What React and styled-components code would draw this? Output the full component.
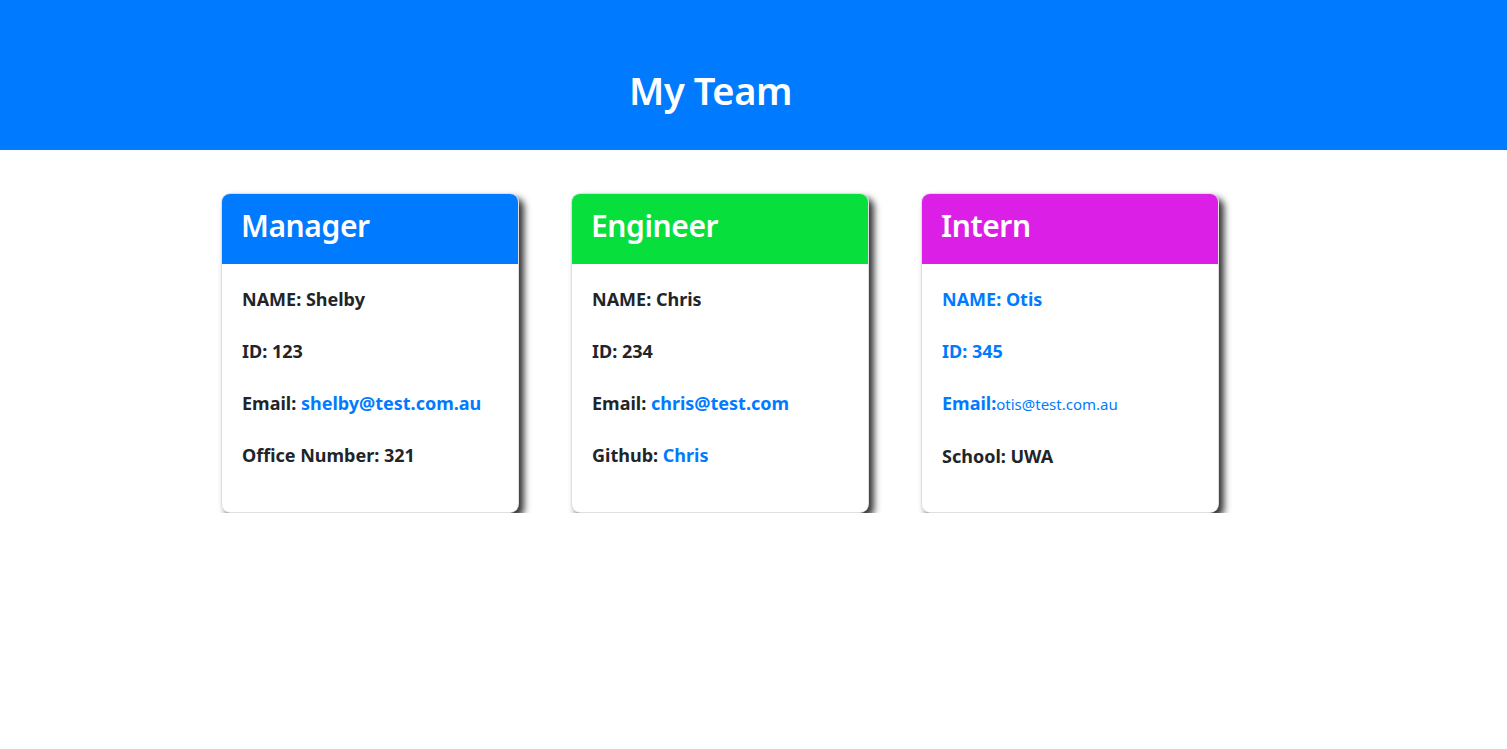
import React from "react";
import styled, { createGlobalStyle } from "styled-components";

const GlobalStyle = createGlobalStyle`
  body {
    margin: 0;
    font-family: "Noto Sans", "Open Sans", sans-serif;
    color: #212529;
    background-color: #fff;
  }
`;

const team = [
  {
    role: "Manager",
    color: "#007bff",
    lines: [
      { label: "NAME: Shelby" },
      { label: "ID: 123" },
      { label: "Email: ", link: "shelby@test.com.au" },
      { label: "Office Number: 321" },
    ],
  },
  {
    role: "Engineer",
    color: "#07e03c",
    lines: [
      { label: "NAME: Chris" },
      { label: "ID: 234" },
      { label: "Email: ", link: "chris@test.com" },
      { label: "Github: ", link: "Chris" },
    ],
  },
  {
    role: "Intern",
    color: "#dc1fe6",
    lines: [
      { label: "NAME: Otis", blue: true },
      { label: "ID: 345", blue: true },
      { label: "Email:", link: "otis@test.com.au", blue: true, small: true },
      { label: "School: UWA" },
    ],
  },
];

const App = () => {
  return (
    <>
      <GlobalStyle />
      <StyledHeader>
        <h1>My Team</h1>
      </StyledHeader>
      <CardRow>
        {team.map((member) => (
          <Card key={member.role}>
            <CardHeader $color={member.color}>{member.role}</CardHeader>
            <CardBody>
              {member.lines.map((line) => (
                <Line key={line.label} $blue={line.blue}>
                  {line.label}
                  {line.link && <Link $small={line.small}>{line.link}</Link>}
                </Line>
              ))}
            </CardBody>
          </Card>
        ))}
      </CardRow>
    </>
  );
};

const StyledHeader = styled.header`
  height: 150px;
  background-color: #007bff;
  display: flex;
  align-items: center;
  padding-left: 629px;
  box-sizing: border-box;

  h1 {
    margin: 30px 0 0;
    color: #fff;
    font-size: 38px;
    font-weight: 600;
    letter-spacing: -0.4px;
  }
`;

const CardRow = styled.main`
  display: flex;
  gap: 52px;
  padding: 43px 0 0 221px;
`;

const Card = styled.div`
  width: 298px;
  height: 320px;
  box-sizing: border-box;
  border: 1px solid rgba(0, 0, 0, 0.125);
  border-radius: 9px;
  background-color: #fff;
  box-shadow: 5px 5px 7px #333;
  overflow: hidden;
  display: flex;
  flex-direction: column;
`;

const CardHeader = styled.div`
  height: 71px;
  box-sizing: border-box;
  padding: 12px 20px 0;
  margin: -1px -1px 0;
  background-color: ${(p) => p.$color};
  border-radius: 4px 4px 0 0;
  color: #fff;
  font-size: 30px;
  font-weight: 600;
  letter-spacing: -0.4px;
`;

const CardBody = styled.div`
  display: flex;
  flex-direction: column;
  gap: 26px;
  padding: 22px 20px 0;
`;

const Line = styled.div`
  font-size: 18px;
  font-weight: 700;
  line-height: 26px;
  color: ${(p) => (p.$blue ? "#007bff" : "#212529")};
`;

const Link = styled.span`
  color: #007bff;
  font-weight: ${(p) => (p.$small ? 400 : 700)};
  font-size: ${(p) => (p.$small ? "15px" : "inherit")};
`;

export default App;
